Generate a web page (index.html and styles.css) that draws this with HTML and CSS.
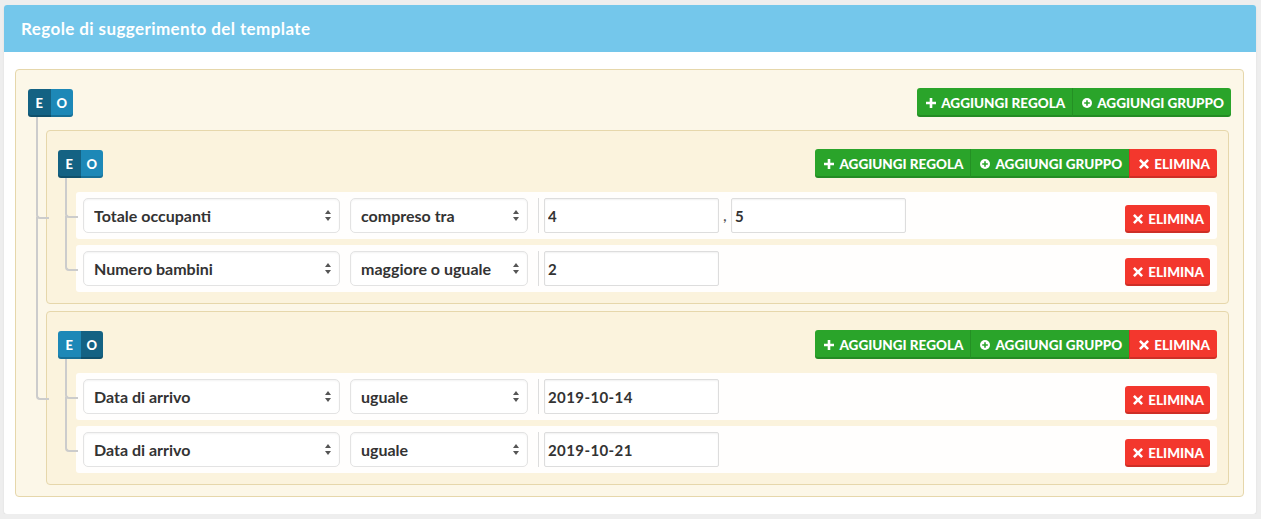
FILE: index.html
```html
<!DOCTYPE html>
<html lang="it">
<head>
    <meta charset="UTF-8">
    <title>Regole di suggerimento del template</title>
    <link rel="stylesheet" href="styles.css">
</head>
<body>
    <div class="panel">
        <div class="panel-heading">Regole di suggerimento del template</div>
        <div class="panel-body">
            <div class="group root">
                <div class="group-header">
                    <div class="conditions">
                        <button class="cond active">E</button><button class="cond">O</button>
                    </div>
                    <div class="actions">
                        <button class="btn green"><svg class="ico" viewBox="0 0 10 10"><path d="M3.7 0h2.6v3.7H10v2.6H6.3V10H3.7V6.3H0V3.7h3.7z"/></svg>AGGIUNGI REGOLA</button><button class="btn green"><svg class="ico" viewBox="0 0 10 10"><circle cx="5" cy="5" r="5"/><path d="M4.2 2.2h1.6v2h2v1.6h-2v2H4.2v-2h-2V4.2h2z" fill="#2aa42a"/></svg>AGGIUNGI GRUPPO</button>
                    </div>
                </div>
                <div class="rules-list">
                    <div class="group item">
                        <div class="group-header">
                            <div class="conditions">
                                <button class="cond active">E</button><button class="cond">O</button>
                            </div>
                            <div class="actions">
                                <button class="btn green"><svg class="ico" viewBox="0 0 10 10"><path d="M3.7 0h2.6v3.7H10v2.6H6.3V10H3.7V6.3H0V3.7h3.7z"/></svg>AGGIUNGI REGOLA</button><button class="btn green"><svg class="ico" viewBox="0 0 10 10"><circle cx="5" cy="5" r="5"/><path d="M4.2 2.2h1.6v2h2v1.6h-2v2H4.2v-2h-2V4.2h2z" fill="#2aa42a"/></svg>AGGIUNGI GRUPPO</button><button class="btn red"><svg class="ico" viewBox="0 0 10 10"><path d="M1.8 0L5 3.2 8.2 0 10 1.8 6.8 5 10 8.2 8.2 10 5 6.8 1.8 10 0 8.2 3.2 5 0 1.8z"/></svg>ELIMINA</button>
                            </div>
                        </div>
                        <div class="rules-list">
                            <div class="rule item">
                                <div class="select wide"><select><option>Totale occupanti</option></select></div>
                                <div class="select"><select><option>compreso tra</option></select></div>
                                <div class="value">
                                    <input type="text" value="4"><span class="sep">,</span><input type="text" value="5">
                                </div>
                                <button class="btn red"><svg class="ico" viewBox="0 0 10 10"><path d="M1.8 0L5 3.2 8.2 0 10 1.8 6.8 5 10 8.2 8.2 10 5 6.8 1.8 10 0 8.2 3.2 5 0 1.8z"/></svg>ELIMINA</button>
                            </div>
                            <div class="rule item">
                                <div class="select wide"><select><option>Numero bambini</option></select></div>
                                <div class="select"><select><option>maggiore o uguale</option></select></div>
                                <div class="value">
                                    <input type="text" value="2">
                                </div>
                                <button class="btn red"><svg class="ico" viewBox="0 0 10 10"><path d="M1.8 0L5 3.2 8.2 0 10 1.8 6.8 5 10 8.2 8.2 10 5 6.8 1.8 10 0 8.2 3.2 5 0 1.8z"/></svg>ELIMINA</button>
                            </div>
                        </div>
                    </div>
                    <div class="group item">
                        <div class="group-header">
                            <div class="conditions">
                                <button class="cond">E</button><button class="cond active">O</button>
                            </div>
                            <div class="actions">
                                <button class="btn green"><svg class="ico" viewBox="0 0 10 10"><path d="M3.7 0h2.6v3.7H10v2.6H6.3V10H3.7V6.3H0V3.7h3.7z"/></svg>AGGIUNGI REGOLA</button><button class="btn green"><svg class="ico" viewBox="0 0 10 10"><circle cx="5" cy="5" r="5"/><path d="M4.2 2.2h1.6v2h2v1.6h-2v2H4.2v-2h-2V4.2h2z" fill="#2aa42a"/></svg>AGGIUNGI GRUPPO</button><button class="btn red"><svg class="ico" viewBox="0 0 10 10"><path d="M1.8 0L5 3.2 8.2 0 10 1.8 6.8 5 10 8.2 8.2 10 5 6.8 1.8 10 0 8.2 3.2 5 0 1.8z"/></svg>ELIMINA</button>
                            </div>
                        </div>
                        <div class="rules-list">
                            <div class="rule item">
                                <div class="select wide"><select><option>Data di arrivo</option></select></div>
                                <div class="select"><select><option>uguale</option></select></div>
                                <div class="value">
                                    <input type="text" value="2019-10-14">
                                </div>
                                <button class="btn red"><svg class="ico" viewBox="0 0 10 10"><path d="M1.8 0L5 3.2 8.2 0 10 1.8 6.8 5 10 8.2 8.2 10 5 6.8 1.8 10 0 8.2 3.2 5 0 1.8z"/></svg>ELIMINA</button>
                            </div>
                            <div class="rule item">
                                <div class="select wide"><select><option>Data di arrivo</option></select></div>
                                <div class="select"><select><option>uguale</option></select></div>
                                <div class="value">
                                    <input type="text" value="2019-10-21">
                                </div>
                                <button class="btn red"><svg class="ico" viewBox="0 0 10 10"><path d="M1.8 0L5 3.2 8.2 0 10 1.8 6.8 5 10 8.2 8.2 10 5 6.8 1.8 10 0 8.2 3.2 5 0 1.8z"/></svg>ELIMINA</button>
                            </div>
                        </div>
                    </div>
                </div>
            </div>
        </div>
    </div>
</body>
</html>
```

FILE: styles.css
```css
* {
    box-sizing: border-box;
}
body {
    margin: 0;
    padding: 5px 5px 0 4px;
    background-color: #eeeeee;
    font-family: Lato, "Open Sans", sans-serif;
    color: #333;
}
.panel {
    background-color: #fff;
    border-radius: 3px;
    box-shadow: 0 1px 2px rgba(0, 0, 0, 0.08);
}
.panel-heading {
    height: 47px;
    padding: 0 17px;
    display: flex;
    align-items: center;
    background-color: #74c7eb;
    color: #fff;
    font-size: 17px;
    font-weight: 700;
    letter-spacing: 0.4px;
    border-radius: 3px 3px 0 0;
}
.panel-body {
    padding: 17px 12px 17px 11px;
}

/* groups */
.group {
    border: 1px solid #e6d7ab;
    border-radius: 4px;
    background-color: rgba(250, 240, 210, 0.5);
    padding: 18px 11px 11px 11px;
}
.group.root {
    padding: 18px 12px 11px 12px;
}
.group-header {
    display: flex;
    justify-content: space-between;
    align-items: center;
    height: 29px;
}
.rules-list {
    display: flex;
    flex-direction: column;
    gap: 6px;
    padding-left: 18px;
    margin-top: 13px;
}
.root > .rules-list {
    gap: 7px;
    margin-right: 2px;
}
.group .group .rules-list {
    margin-top: 14px;
}

/* tree lines */
.item {
    position: relative;
}
.item::before {
    content: "";
    position: absolute;
    left: -11px;
    top: -14px;
    width: 11px;
    height: calc(50% + 14px);
    border: solid #cccccc;
    border-width: 0 0 2px 2px;
    border-bottom-left-radius: 4px;
}
.item:not(:last-child)::after {
    content: "";
    position: absolute;
    left: -11px;
    top: 50%;
    height: calc(50% + 8px);
    border-left: 2px solid #cccccc;
}

/* and / or */
.conditions {
    display: flex;
    position: relative;
    z-index: 1;
}
.cond {
    width: 22.5px;
    height: 28px;
    padding: 0;
    border: 0;
    background-color: #1d88b7;
    color: #fff;
    font-family: inherit;
    font-size: 13px;
    font-weight: 900;
    box-shadow: inset 0 -2px 0 rgba(0, 0, 0, 0.18);
}
.cond.active {
    background-color: #146283;
}
.cond:first-child {
    border-radius: 3px 0 0 3px;
}
.cond:last-child {
    border-radius: 0 3px 3px 0;
}

/* buttons */
.actions {
    display: flex;
}
.btn {
    display: flex;
    align-items: center;
    gap: 5px;
    height: 29px;
    padding: 0 7px 0 9px;
    border: 0;
    color: #fff;
    font-family: inherit;
    font-size: 13.5px;
    font-weight: 900;
    white-space: nowrap;
    box-shadow: inset 0 -2px 0 rgba(0, 0, 0, 0.15);
}
.btn.green {
    background-color: #2aa42a;
}
.btn.red {
    background-color: #f3372d;
}
.actions .btn + .btn {
    border-left: 1px solid rgba(0, 0, 0, 0.12);
}
.actions .btn:first-child {
    border-radius: 3px 0 0 3px;
}
.actions .btn:last-child {
    border-radius: 0 3px 3px 0;
}
.rule .btn {
    height: 28px;
    margin-left: auto;
    padding: 0 6px 0 8px;
    border-radius: 3px;
}
.ico {
    width: 10px;
    height: 10px;
    fill: #fff;
    flex: none;
}

/* rule rows */
.rule {
    display: flex;
    align-items: flex-end;
    height: 47px;
    padding: 6px 7px;
    background-color: rgba(255, 255, 255, 0.92);
    border-radius: 3px;
}
.select {
    position: relative;
    width: 178px;
    margin-right: 10px;
}
.select.wide {
    width: 257px;
}
.select select {
    width: 100%;
    height: 35px;
    padding: 0 20px 0 10px;
    appearance: none;
    -webkit-appearance: none;
    border: 1px solid #e3e3e3;
    border-radius: 5px;
    background-color: #fff;
    box-shadow: inset 0 1px 2px rgba(0, 0, 0, 0.05);
    color: #333;
    font-family: inherit;
    font-size: 16px;
    font-weight: 700;
}
.select::before,
.select::after {
    content: "";
    position: absolute;
    right: 9px;
    border-left: 3.5px solid transparent;
    border-right: 3.5px solid transparent;
}
.select::before {
    top: 12px;
    border-bottom: 4.5px solid #555;
}
.select::after {
    top: 19px;
    border-top: 4.5px solid #555;
}
.value {
    display: flex;
    align-items: center;
    height: 35px;
    padding-left: 5px;
    border-left: 1px solid #dddddd;
}
.value input {
    width: 175px;
    height: 35px;
    padding: 0 3px;
    border: 1px solid #dddddd;
    border-radius: 2px;
    box-shadow: inset 0 1px 2px rgba(0, 0, 0, 0.06);
    color: #333;
    font-family: inherit;
    font-size: 15px;
    font-weight: 700;
    letter-spacing: 0.4px;
}
.sep {
    width: 12px;
    text-align: center;
    color: #555;
    font-size: 14px;
    font-weight: 700;
}
```
